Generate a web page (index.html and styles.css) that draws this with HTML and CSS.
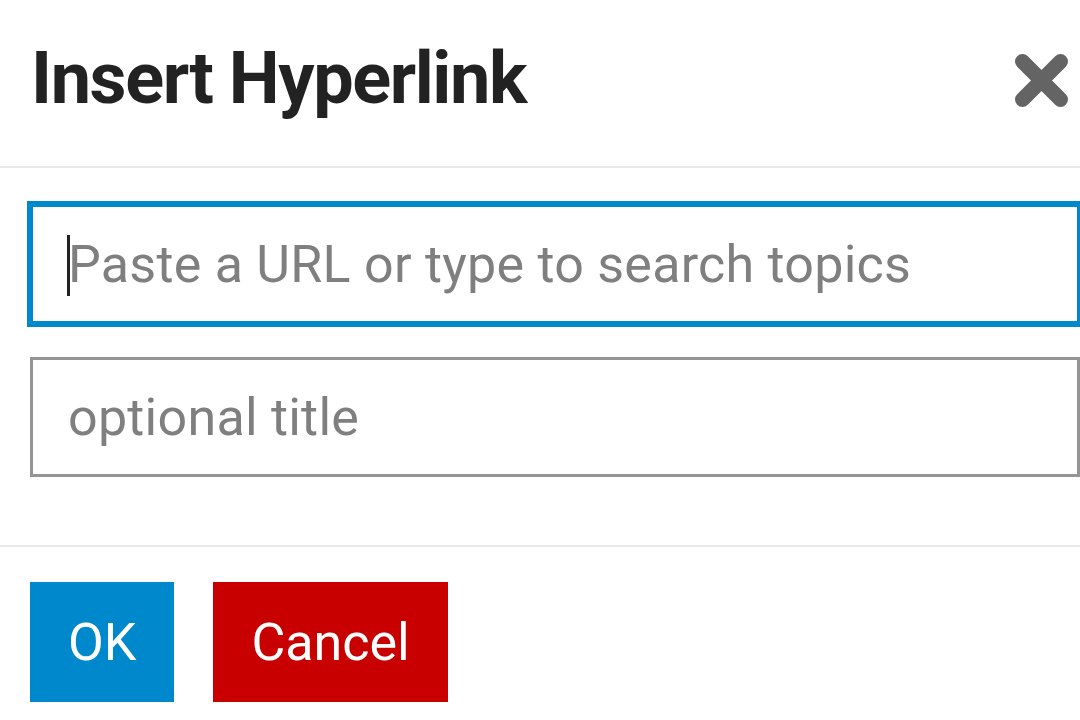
FILE: index.html
```html
<!DOCTYPE html>
<html lang="en">
<head>
<meta charset="utf-8">
<title>Insert Hyperlink</title>
<link rel="stylesheet" href="styles.css">
</head>
<body>
<div class="modal">
  <header class="modal-header">
    <h1 class="modal-title">Insert Hyperlink</h1>
    <button class="close-btn" aria-label="Close">
      <svg class="close-icon" viewBox="0 0 55 55" width="55" height="55">
        <path d="M8.5 8.5 L46.5 46.5 M46.5 8.5 L8.5 46.5" stroke="#646464" stroke-width="15" stroke-linecap="round"/>
      </svg>
    </button>
  </header>
  <section class="modal-body">
    <div class="field">
      <input class="text-input text-input--focus" type="text" placeholder="Paste a URL or type to search topics">
      <span class="caret"></span>
    </div>
    <div class="field field--second">
      <input class="text-input" type="text" placeholder="optional title">
    </div>
  </section>
  <footer class="modal-footer">
    <button class="btn btn-primary">OK</button>
    <button class="btn btn-danger">Cancel</button>
  </footer>
</div>
</body>
</html>
```
FILE: styles.css
```css
html, body {
  margin: 0;
  padding: 0;
  background: #ffffff;
  overflow: hidden;
}

body {
  width: 1080px;
  height: 720px;
  font-family: Roboto, "Noto Sans", "Liberation Sans", sans-serif;
}

.modal {
  width: 1080px;
}

.modal-header {
  display: flex;
  justify-content: space-between;
  align-items: flex-start;
  padding: 43px 11px 51px 31px;
  border-bottom: 2px solid #e9e9e9;
}

.modal-title {
  margin: 0;
  font-size: 72px;
  line-height: 72px;
  font-weight: 700;
  letter-spacing: -1.4px;
  color: #222222;
}

.close-btn {
  margin: 10px 0 0 0;
  padding: 0;
  border: none;
  background: none;
  display: flex;
}

.close-icon {
  display: block;
}

.modal-body {
  padding: 36px 0 68px 30px;
  border-bottom: 2px solid #e9e9e9;
}

.field {
  position: relative;
}

.field--second {
  margin-top: 33px;
}

.text-input {
  display: block;
  box-sizing: border-box;
  width: 1050px;
  height: 120px;
  margin: 0;
  padding: 0 20px 0 35px;
  border: 3px solid #959595;
  border-radius: 0;
  background: #ffffff;
  font-family: Roboto, "Noto Sans", "Liberation Sans", sans-serif;
  font-size: 52px;
  letter-spacing: 0.25px;
  color: #222222;
  outline: none;
}

.text-input::placeholder {
  color: #7f7f7f;
  opacity: 1;
}

.text-input--focus {
  border-color: #0088cc;
  box-shadow: 0 0 0 3px #0088cc;
}

.caret {
  position: absolute;
  left: 37px;
  top: 31px;
  width: 3px;
  height: 61px;
  background: #222222;
}

.modal-footer {
  display: flex;
  gap: 39px;
  padding: 35px 0 0 30px;
}

.btn {
  height: 120px;
  padding: 0 38px;
  border: none;
  border-radius: 0;
  font-family: Roboto, "Noto Sans", "Liberation Sans", sans-serif;
  font-size: 52px;
  color: #ffffff;
}

.btn-primary {
  background: #0088cc;
}

.btn-danger {
  background: #c80000;
}
```
